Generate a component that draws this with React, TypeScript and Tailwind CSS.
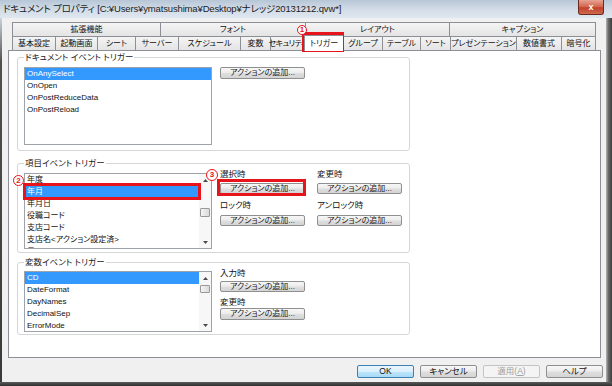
import type { ReactNode } from "react"

const topTabs = [
  { label: "拡張機能", w: "w-[148px]" },
  { label: "フォント", w: "w-[145px]" },
  { label: "レイアウト", w: "w-[144px]" },
  { label: "キャプション", w: "w-[147px]" },
]

const tabs = [
  { label: "基本設定", w: "w-[43px]" },
  { label: "起動画面", w: "w-[42px]" },
  { label: "シート", w: "w-[38px]" },
  { label: "サーバー", w: "w-[43px]" },
  { label: "スケジュール", w: "w-[62px]" },
  { label: "変数", w: "w-[30px]" },
  { label: "セキュリティ", w: "w-[34px] tracking-[-0.6px]" },
  { label: "トリガー", w: "w-[39px]", active: true },
  { label: "グループ", w: "w-[39px]" },
  { label: "テーブル", w: "w-[38px]" },
  { label: "ソート", w: "w-[30px]" },
  { label: "プレゼンテーション", w: "w-[66px]" },
  { label: "数値書式", w: "w-[45px]" },
  { label: "暗号化", w: "w-[35px]" },
]

function ActionButton({ h = "h-[12px]", mt = "" }: { h?: string; mt?: string }) {
  return (
    <div
      className={`${h} ${mt} w-[85px] shrink-0 flex items-center justify-center rounded-[2px] border border-[#8e8f8f] bg-[linear-gradient(180deg,#f7f7f7_0%,#ededed_45%,#dedede_55%,#d4d4d4_100%)] text-[8px] leading-none text-[#1a1a1a]`}
    >
      アクションの追加...
    </div>
  )
}

function Label({ children, mt = "" }: { children: ReactNode; mt?: string }) {
  return <div className={`${mt} h-[10px] text-[8.5px] leading-[10px] text-[#111] whitespace-nowrap`}>{children}</div>
}

function ScrollBar({ thumb }: { thumb: string }) {
  return (
    <div className="w-[12px] shrink-0 flex flex-col bg-[#f7f7f7]">
      <div className="h-[12px] flex items-center justify-center">
        <svg width="5" height="3" viewBox="0 0 5 3">
          <path d="M0 3 L2.5 0 L5 3Z" fill="#4a4a4a" />
        </svg>
      </div>
      <div className="flex-1 flex flex-col items-center">
        <div className={`${thumb} w-[10px] rounded-[1px] border border-[#9a9a9a] bg-[linear-gradient(90deg,#f4f4f4,#dadada)]`} />
      </div>
      <div className="h-[12px] flex items-center justify-center">
        <svg width="5" height="3" viewBox="0 0 5 3">
          <path d="M0 0 L2.5 3 L5 0Z" fill="#4a4a4a" />
        </svg>
      </div>
    </div>
  )
}

function ListBox({ items, selected, h, mt, thumb }: { items: string[]; selected: number; h: string; mt: string; thumb?: string }) {
  return (
    <div className={`${h} ${mt} w-[188px] shrink-0 flex border border-[#9ea3aa] bg-white overflow-hidden`}>
      <div className="flex-1 min-w-0 flex flex-col">
        {items.map((t, i) => (
          <div
            key={t}
            className={`h-[12px] shrink-0 flex items-center pl-[2px] text-[8px] leading-none whitespace-nowrap ${
              i === selected ? "bg-[#3399ff] text-white" : "text-[#111]"
            }`}
          >
            {t}
          </div>
        ))}
      </div>
      {thumb && <ScrollBar thumb={thumb} />}
    </div>
  )
}

function Group({ title, className, children }: { title: string; className: string; children: ReactNode }) {
  return (
    <fieldset className={`ml-[8px] w-[393px] rounded-[3px] border border-[#d6d6d6] px-[6px] ${className}`}>
      <legend className="px-[1px] text-[8.5px] leading-[10px] text-[#222]">{title}</legend>
      <div className="flex items-start gap-[8px]">{children}</div>
    </fieldset>
  )
}

function Marker({ n, className }: { n: string; className: string }) {
  return (
    <span
      className={`absolute flex items-center justify-center rounded-full border-[1.5px] border-[#e8141c] bg-white text-[8px] font-bold leading-none text-[#e8141c] ${className}`}
    >
      {n}
    </span>
  )
}

function DialogButton({ children, variant = "normal" }: { children: ReactNode; variant?: "default" | "normal" | "disabled" }) {
  const look =
    variant === "default"
      ? "border-[#3c7fb1] bg-[linear-gradient(180deg,#eaf6fd_0%,#d9f0fc_50%,#bee6fd_51%,#a7d9f5_100%)] text-[#111]"
      : variant === "disabled"
        ? "border-[#c4c4c4] bg-[#f4f4f4] text-[#a0a0a0]"
        : "border-[#8e8f8f] bg-[linear-gradient(180deg,#f7f7f7_0%,#ededed_45%,#dedede_55%,#d4d4d4_100%)] text-[#111]"
  return (
    <div className={`h-[13px] w-[57px] flex items-center justify-center rounded-[2px] border text-[8.5px] leading-none ${look}`}>
      {children}
    </div>
  )
}

export default function App() {
  return (
    <div className="relative w-[612px] h-[386px] overflow-hidden flex flex-col bg-[#f0f0f0] font-['Liberation_Sans','Noto_Sans_CJK_JP',sans-serif] [font-feature-settings:'palt']">
      {/* Title bar */}
      <div className="h-[18px] shrink-0 flex items-start bg-[linear-gradient(180deg,#b7c6d6_0%,#d3dde8_55%,#dfe7ef_100%)]">
        <div className="flex-1 pl-[3px] pt-[3px] text-[9.5px] leading-[12px] tracking-[-0.15px] text-[#1b1b1b] whitespace-nowrap">
          ドキュメント プロパティ [C:¥Users¥ymatsushima¥Desktop¥ナレッジ20131212.qvw*]
        </div>
        <div className="mr-[8px] h-[15px] w-[26px] flex items-center justify-center rounded-b-[3px] border border-t-0 border-[#6f2a20] bg-[linear-gradient(180deg,#e8a393_0%,#d1624c_50%,#c2402a_55%,#cf6a4f_100%)] text-[9px] font-bold leading-none text-white">
          x
        </div>
      </div>

      <div className="flex-1 flex">
        {/* left frame */}
        <div className="w-[2px] bg-[linear-gradient(180deg,#c9d3de_0%,#505050_12%,#3a3a3a_100%)]" />

        {/* client area */}
        <div className="flex-1 flex flex-col">
          {/* tabs */}
          <div className="ml-[10px] mt-[4px] flex h-[14px]">
            {topTabs.map((t, i) => (
              <div
                key={t.label}
                className={`${t.w} flex items-center justify-center border-t border-l border-[#8c8f96] bg-[linear-gradient(180deg,#f4f4f4,#e4e4e4)] text-[8px] leading-none text-[#111] ${
                  i === topTabs.length - 1 ? "border-r" : ""
                }`}
              >
                {t.label}
              </div>
            ))}
          </div>
          <div className="ml-[10px] flex h-[14px] items-end">
            {tabs.map((t, i) =>
              t.active ? (
                <div
                  key={t.label}
                  className={`${t.w} relative z-10 -mb-px h-[16px] flex items-center justify-center border-t border-l border-[#8c8f96] bg-white text-[8px] leading-none text-[#111] whitespace-nowrap`}
                >
                  {t.label}
                </div>
              ) : (
                <div
                  key={t.label}
                  className={`${t.w} h-[14px] flex items-center justify-center border-t border-l border-[#8c8f96] bg-[linear-gradient(180deg,#f4f4f4,#e4e4e4)] text-[8px] leading-none text-[#111] whitespace-nowrap ${
                    i === tabs.length - 1 ? "border-r" : ""
                  }`}
                >
                  {t.label}
                </div>
              )
            )}
          </div>

          {/* panel */}
          <div className="ml-[6px] w-[593px] h-[308px] border border-[#8c8f96] bg-white">
            <Group title="ドキュメント イベント トリガー" className="mt-[1px] pb-[5px]">
              <ListBox
                items={["OnAnySelect", "OnOpen", "OnPostReduceData", "OnPostReload"]}
                selected={0}
                h="h-[78px]"
                mt="mt-[5px]"
              />
              <ActionButton mt="mt-[5px]" />
            </Group>

            <Group title="項目イベント トリガー" className="mt-[7px] pb-[3px]">
              <ListBox
                items={["年度", "年月", "年月日", "役職コード", "支店コード", "支店名<アクション設定済>", "日"]}
                selected={1}
                h="h-[76px]"
                mt="mt-[5px]"
                thumb="mt-[22px] h-[9px]"
              />
              <div className="grid grid-cols-[85px_85px] gap-x-[12px]">
                <div className="flex flex-col">
                  <Label mt="mt-px">選択時</Label>
                  <ActionButton h="h-[11px]" mt="mt-[4px]" />
                  <Label mt="mt-[6px]">ロック時</Label>
                  <ActionButton h="h-[11px]" mt="mt-[5px]" />
                </div>
                <div className="flex flex-col">
                  <Label mt="mt-px">変更時</Label>
                  <ActionButton h="h-[11px]" mt="mt-[4px]" />
                  <Label mt="mt-[6px]">アンロック時</Label>
                  <ActionButton h="h-[11px]" mt="mt-[5px]" />
                </div>
              </div>
            </Group>

            <Group title="変数イベント トリガー" className="mt-[4px] pb-[2px]">
              <ListBox
                items={["CD", "DateFormat", "DayNames", "DecimalSep", "ErrorMode"]}
                selected={0}
                h="h-[61px]"
                mt="mt-[4px]"
                thumb="mt-[1px] h-[8px]"
              />
              <div className="flex flex-col">
                <Label mt="mt-[1px]">入力時</Label>
                <ActionButton h="h-[11px]" mt="mt-[3px]" />
                <Label mt="mt-[5px]">変更時</Label>
                <ActionButton h="h-[12px]" mt="mt-[1px]" />
              </div>
            </Group>
          </div>

          {/* dialog buttons */}
          <div className="flex justify-end gap-[6px] pt-[7px] pr-[3px]">
            <DialogButton variant="default">OK</DialogButton>
            <DialogButton>キャンセル</DialogButton>
            <DialogButton variant="disabled">
              適用(<span className="underline">A</span>)
            </DialogButton>
            <DialogButton>ヘルプ</DialogButton>
          </div>
        </div>

        {/* right frame */}
        <div className="w-[6px] bg-[linear-gradient(90deg,#b5b5b5_0%,#6a6a6a_40%,#3c3c3c_100%)]" />
      </div>

      {/* bottom frame */}
      <div className="h-[4px] shrink-0 bg-[linear-gradient(180deg,#5a5a5a,#2e2e2e)]" />

      {/* annotations */}
      <div className="absolute left-[302px] top-[32px] h-[20px] w-[42px] border-[3px] border-[#e8141c]" />
      <div className="absolute left-[23px] top-[183px] h-[17px] w-[178px] border-[3px] border-[#e8141c]" />
      <div className="absolute left-[217px] top-[179px] h-[17px] w-[89px] border-[3px] border-[#e8141c]" />
      <Marker n="1" className="left-[297px] top-[25px] h-[10px] w-[10px]" />
      <Marker n="2" className="left-[13px] top-[175px] h-[11px] w-[11px]" />
      <Marker n="3" className="left-[206px] top-[169px] h-[12px] w-[12px]" />
    </div>
  )
}
